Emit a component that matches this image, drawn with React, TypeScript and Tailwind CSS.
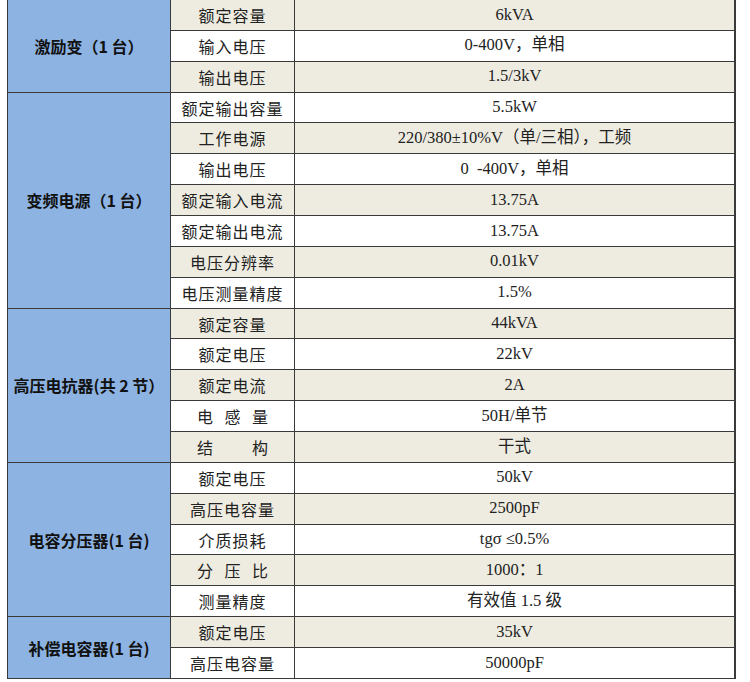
import React from 'react';

type Row = { label: string; value: string; spread?: boolean };
type Group = { name: string; rows: Row[] };

const groups: Group[] = [
  {
    name: '激励变（1 台）',
    rows: [
      { label: '额定容量', value: '6kVA' },
      { label: '输入电压', value: '0-400V，单相' },
      { label: '输出电压', value: '1.5/3kV' },
    ],
  },
  {
    name: '变频电源（1 台）',
    rows: [
      { label: '额定输出容量', value: '5.5kW' },
      { label: '工作电源', value: '220/380±10%V（单/三相），工频' },
      { label: '输出电压', value: '0  -400V，单相' },
      { label: '额定输入电流', value: '13.75A' },
      { label: '额定输出电流', value: '13.75A' },
      { label: '电压分辨率', value: '0.01kV' },
      { label: '电压测量精度', value: '1.5%' },
    ],
  },
  {
    name: '高压电抗器(共 2 节）',
    rows: [
      { label: '额定容量', value: '44kVA' },
      { label: '额定电压', value: '22kV' },
      { label: '额定电流', value: '2A' },
      { label: '电感量', value: '50H/单节', spread: true },
      { label: '结构', value: '干式', spread: true },
    ],
  },
  {
    name: '电容分压器(1 台)',
    rows: [
      { label: '额定电压', value: '50kV' },
      { label: '高压电容量', value: '2500pF' },
      { label: '介质损耗', value: 'tgσ ≤0.5%' },
      { label: '分压比', value: '1000：1', spread: true },
      { label: '测量精度', value: '有效值 1.5 级' },
    ],
  },
  {
    name: '补偿电容器(1 台)',
    rows: [
      { label: '额定电压', value: '35kV' },
      { label: '高压电容量', value: '50000pF' },
    ],
  },
];

const Label: React.FC<{ row: Row }> = ({ row }) => {
  if (row.spread) {
    return (
      <div className="flex w-[71px] justify-between">
        {row.label.split('').map((c, i) => (
          <span key={i}>{c}</span>
        ))}
      </div>
    );
  }
  return <span className="tracking-[1px]">{row.label}</span>;
};

export default function App() {
  let rowIndex = 0;

  return (
    <div className="h-[682px] w-[750px] bg-white font-['Noto_Sans_CJK_SC',sans-serif]">
      <div className="ml-[7px] flex w-[729px] flex-col border-l border-[#3a3a3a]">
        {groups.map((g, gi) => (
          <div key={gi} className="flex border-b border-[#3a3a3a]">
            <div className="flex w-[163px] shrink-0 items-center justify-center border-r border-[#3a3a3a] bg-[#8DB3E2] text-[16px] font-bold text-[#111]">
              {g.name}
            </div>
            <div className="flex flex-1 flex-col">
              {g.rows.map((r, ri) => {
                const shaded = rowIndex++ % 2 === 0;
                const last = ri === g.rows.length - 1;
                return (
                  <div
                    key={ri}
                    className={`flex ${last ? 'h-[29.86px]' : 'h-[30.86px] border-b border-[#3a3a3a]'} ${shaded ? 'bg-[#EEECE1]' : 'bg-white'}`}
                  >
                    <div className="flex w-[124px] shrink-0 items-center justify-center border-r border-[#3a3a3a] text-[16px] text-[#222]">
                      <Label row={r} />
                    </div>
                    <div className="flex flex-1 items-center justify-center whitespace-pre border-r-2 border-[#3a3a3a] font-['Liberation_Serif','Noto_Sans_CJK_SC',serif] text-[16.5px] text-[#222]">
                      {r.value}
                    </div>
                  </div>
                );
              })}
            </div>
          </div>
        ))}
      </div>
    </div>
  );
}
